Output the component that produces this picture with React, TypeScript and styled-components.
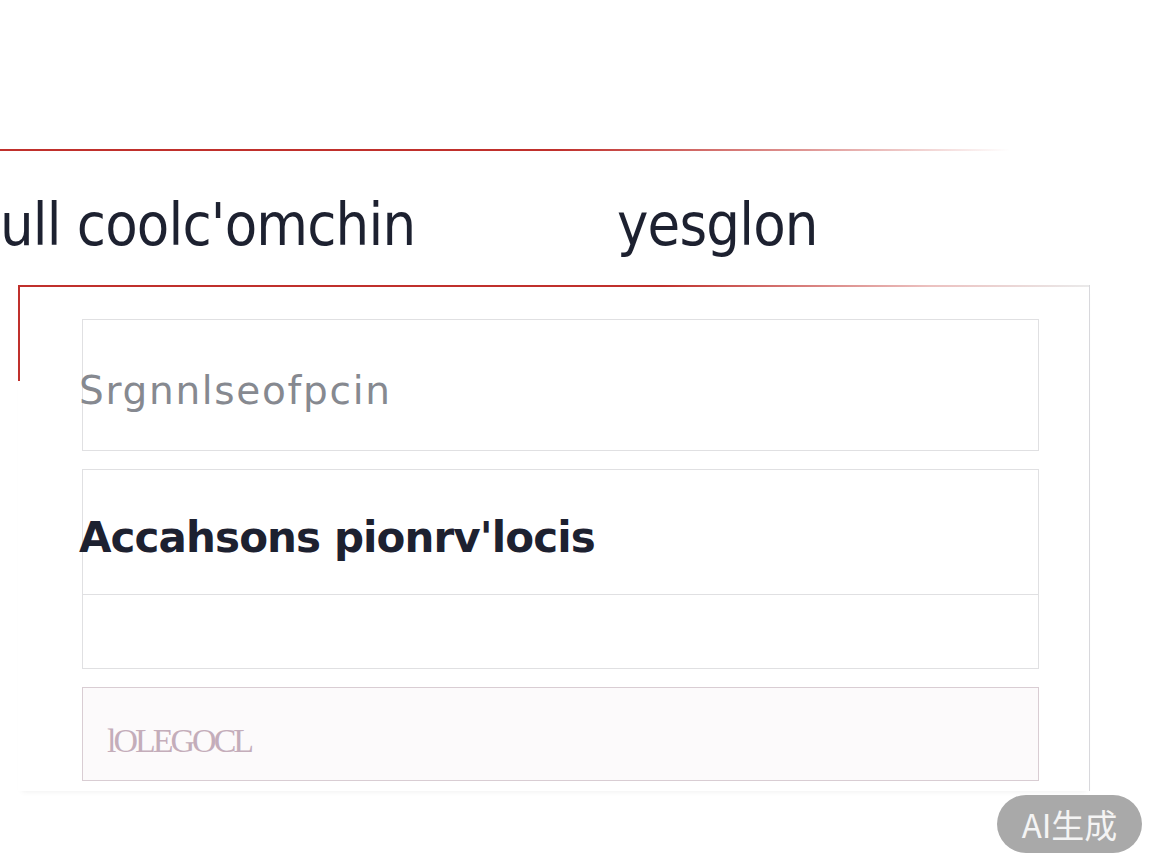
import React from "react";
import styled, { createGlobalStyle } from "styled-components";

const Global = createGlobalStyle`
  html, body { margin: 0; padding: 0; background: #ffffff; }
  body { width: 1152px; height: 864px; overflow: hidden; font-family: "DejaVu Sans", sans-serif; }
`;

const Page = styled.div`
  position: relative;
  width: 1152px;
  height: 864px;
  padding-top: 149px;
  box-sizing: border-box;
`;

const TopRule = styled.div`
  height: 2px;
  width: 1010px;
  background: linear-gradient(90deg, #c0302c 0%, #c0302c 55%, rgba(192,48,44,0.5) 80%, rgba(192,48,44,0) 100%);
`;

const HeadingRow = styled.div`
  display: flex;
  align-items: baseline;
  margin-top: 36px;
  margin-left: 0;
  height: 98px;
`;

const Heading = styled.h1<{ $w: number }>`
  margin: 0;
  width: ${(p) => p.$w}px;
  font-family: "DejaVu Sans Condensed", "DejaVu Sans", sans-serif;
  font-weight: 400;
  font-size: 59px;
  letter-spacing: -0.8px;
  color: #1d2130;
  line-height: 76px;
  white-space: nowrap;
`;

const Panel = styled.section`
  position: relative;
  margin-left: 18px;
  width: 1072px;
  box-sizing: border-box;
  padding: 34px 50px 10px 64px;
  border-right: 1px solid #d8d8dc;
  box-shadow: 0 4px 6px -4px rgba(0,0,0,0.08);
  display: flex;
  flex-direction: column;
  gap: 18px;
  &::before {
    content: "";
    position: absolute;
    left: 0;
    top: 0;
    right: 0;
    height: 2px;
    background: linear-gradient(90deg, #c0302c 0%, #c0302c 60%, rgba(192,48,44,0.3) 85%, rgba(220,220,220,0.6) 100%);
  }
  &::after {
    content: "";
    position: absolute;
    left: 0;
    top: 0;
    width: 2px;
    height: 96px;
    background: #c0302c;
  }
`;

const Field = styled.div<{ $h: number; $tint?: boolean }>`
  height: ${(p) => p.$h}px;
  box-sizing: border-box;
  border: 1px solid ${(p) => (p.$tint ? "#d9cdd3" : "#e0e0e2")};
  background: ${(p) => (p.$tint ? "#fcfafb" : "#ffffff")};
  display: flex;
  align-items: center;
`;

const Group = styled.div`
  display: flex;
  flex-direction: column;
  border: 1px solid #e0e0e2;
`;

const GroupRow = styled.div<{ $h: number }>`
  height: ${(p) => p.$h}px;
  display: flex;
  align-items: center;
  & + & { border-top: 1px solid #e0e0e2; }
`;

const Placeholder = styled.span`
  margin-left: -4px;
  margin-top: 10px;
  font-family: "DejaVu Sans", sans-serif;
  font-size: 39px;
  letter-spacing: 1.7px;
  color: #868990;
`;

const Strong = styled.span`
  margin-left: -4px;
  margin-top: 10px;
  font-family: "DejaVu Sans", sans-serif;
  font-weight: 700;
  font-size: 42px;
  letter-spacing: -0.9px;
  color: #1d2130;
`;

const Faint = styled.span`
  margin-left: 24px;
  margin-top: 14px;
  font-family: "Liberation Serif", serif;
  font-size: 34px;
  letter-spacing: -3px;
  color: #c4adba;
`;

const Badge = styled.div`
  position: absolute;
  left: 997px;
  top: 795px;
  width: 145px;
  height: 58px;
  border-radius: 29px;
  background: #a9a9a9;
  color: #f4f4f4;
  display: flex;
  align-items: center;
  justify-content: center;
  font-family: "Noto Sans CJK SC", "Noto Sans", sans-serif;
  font-size: 33px;
`;

export default function App() {
  return (
    <>
      <Global />
      <Page>
        <TopRule />
        <HeadingRow>
          <Heading $w={617}>ull coolc'omchin</Heading>
          <Heading $w={300}>yesglon</Heading>
        </HeadingRow>
        <Panel>
          <Field $h={132}>
            <Placeholder>Srgnnlseofpcin</Placeholder>
          </Field>
          <Group>
            <GroupRow $h={124}>
              <Strong>Accahsons pionrv'locis</Strong>
            </GroupRow>
            <GroupRow $h={73} />
          </Group>
          <Field $h={94} $tint>
            <Faint>lOLEGOCL</Faint>
          </Field>
        </Panel>
        <Badge>AI生成</Badge>
      </Page>
    </>
  );
}
